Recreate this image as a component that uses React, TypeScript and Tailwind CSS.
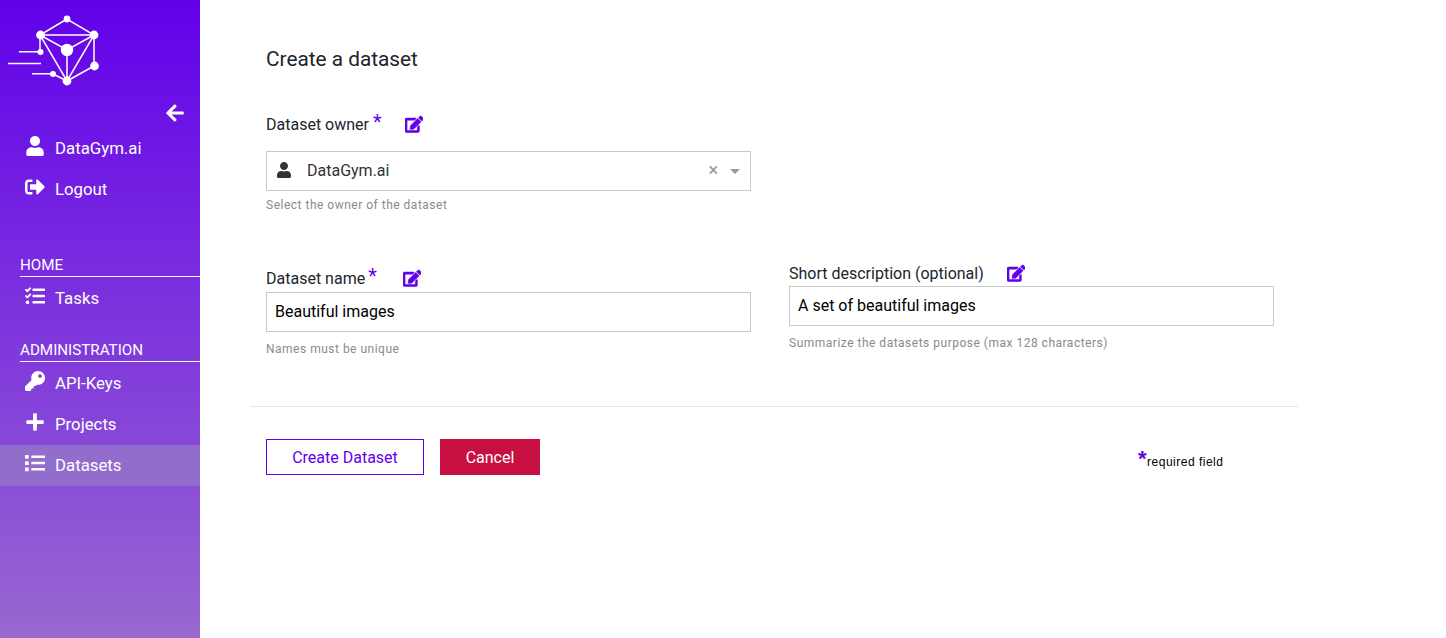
import React from 'react';
import { FaArrowLeft, FaEdit, FaKey, FaList, FaPlus, FaSignOutAlt, FaTasks, FaUser } from 'react-icons/fa';

const Logo = () => (
  <svg width="120" height="95" viewBox="0 0 120 95" className="block">
    <g stroke="#fff" strokeWidth="1.5" fill="none">
      <path d="M67 19 40 35 67 81 94 35Z" />
      <path d="M40 35H94V66L67 81" />
      <path d="M40 35 67 50 94 35M67 50V81M40 35V52M53 74 67 81" />
    </g>
    <g stroke="#fff" strokeWidth="1.5">
      <path d="M19 51.8H40M8 63.5H41M32 73.8H53" />
    </g>
    <g fill="#fff">
      <circle cx="67" cy="19" r="3.4" />
      <circle cx="40.5" cy="35" r="4.4" />
      <circle cx="94" cy="35" r="4.4" />
      <circle cx="67" cy="50" r="6.2" />
      <circle cx="94.5" cy="66" r="4.4" />
      <circle cx="67" cy="81" r="4.4" />
      <circle cx="40.5" cy="52" r="3" />
      <circle cx="53" cy="74" r="3" />
    </g>
  </svg>
);

// ── Sidebar ─────────────────────────────────────────────────────────────────
const NavItem: React.FC<{ icon: React.ReactNode; label: string; active?: boolean }> = ({ icon, label, active }) => (
  <div className={`flex items-center h-[41px] pl-[25px] text-white text-[16.8px] ${active ? 'bg-[#936dcb]' : ''}`}>
    <span className="w-[30px] flex -translate-y-[3px]">{icon}</span>
    {label}
  </div>
);

const NavHeading: React.FC<{ label: string }> = ({ label }) => (
  <div className="ml-5 mb-px border-b border-white text-white text-[15.2px] leading-[19px] h-[21px] uppercase">{label}</div>
);

const Sidebar = () => (
  <aside className="w-[200px] shrink-0 min-h-[638px] flex flex-col bg-linear-to-b/srgb from-[#6200ea] to-[#9868d0]">
    <Logo />
    <div className="flex justify-end pr-[15px] h-[33px] pt-[8px]">
      <FaArrowLeft size={20} color="#fff" />
    </div>
    <NavItem icon={<FaUser size={20} />} label="DataGym.ai" />
    <NavItem icon={<FaSignOutAlt size={20} />} label="Logout" />
    <div className="h-[46px]" />
    <NavHeading label="Home" />
    <NavItem icon={<FaTasks size={20} />} label="Tasks" />
    <div className="h-[22px]" />
    <NavHeading label="Administration" />
    <NavItem icon={<FaKey size={20} />} label="API-Keys" />
    <NavItem icon={<FaPlus size={20} />} label="Projects" />
    <NavItem icon={<FaList size={20} />} label="Datasets" active />
  </aside>
);

// ── Form bits ───────────────────────────────────────────────────────────────
const Star = () => <span className="text-[#6200ea] text-[20px] leading-none">*</span>;

const FieldLabel: React.FC<{ label: string; required?: boolean; gap: string; starGap?: string }> = ({ label, required, gap, starGap }) => (
  <div className="flex items-center h-6 text-[16px] text-[#212529]">
    <span>{label}</span>
    {required && <span className={`${starGap ?? 'ml-[3px]'} -translate-y-px`}><Star /></span>}
    <span className={gap}>
      <FaEdit size={18.5} color="#6200ea" stroke="#6200ea" strokeWidth={18} className="block -translate-y-[1px]" />
    </span>
  </div>
);

const Help: React.FC<{ text: string; className?: string }> = ({ text, className }) => (
  <p className={`text-[12px] leading-[14px] tracking-[0.5px] text-[#8a8a8a] ${className ?? 'mt-[10px]'}`}>{text}</p>
);

const TextBox: React.FC<{ value: string }> = ({ value }) => (
  <div className="h-10 border border-[#c8c8c8] flex items-center px-2 text-[16px] text-black">{value}</div>
);

export default function App() {
  return (
    <div className="flex min-h-[638px] bg-white" style={{ fontFamily: 'Roboto, sans-serif' }}>
      <Sidebar />
      <main className="flex-1 pl-[50px]">
        <div className="w-[1048px]">
          <div className="px-4 pt-[45px]">
            <h1 className="text-[20.8px] leading-7 text-[#212529]">Create a dataset</h1>

            <div className="mt-[40px] w-[485px]">
              <FieldLabel label="Dataset owner" required starGap="ml-[4px]" gap="ml-[23px]" />
              <div className="mt-[14px] h-10 border border-[#c8c8c8] flex items-center text-[16px] text-[#333]">
                <FaUser size={16} color="#333" className="ml-[9px] mr-[15px] -translate-y-[1px]" />
                <span className="flex-1">DataGym.ai</span>
                <span className="text-[#999] text-[18px] leading-none mr-[12px] -translate-y-[1px]">×</span>
                <span className="mr-[10px] w-0 h-0 border-x-[5px] border-x-transparent border-t-[5px] border-t-[#999]" />
              </div>
              <Help text="Select the owner of the dataset" className="mt-[7px]" />
            </div>

            <div className="mt-[50px] grid grid-cols-[485px_485px] gap-x-[38px] items-start">
              <div className="pt-[5px]">
                <FieldLabel label="Dataset name" required gap="ml-[26px]" />
                <div className="mt-[1px]"><TextBox value="Beautiful images" /></div>
                <Help text="Names must be unique" />
              </div>
              <div>
                <FieldLabel label="Short description (optional)" gap="ml-[23px]" />
                <TextBox value="A set of beautiful images" />
                <Help text="Summarize the datasets purpose (max 128 characters)" />
              </div>
            </div>
          </div>

          <hr className="mt-[50px] border-t border-[#e4e4e4]" />

          <div className="px-4 mt-8 flex items-start">
            <button className="w-[158px] h-9 pt-px border border-[#6200ea] text-[#6200ea] text-[16px] bg-white">Create Dataset</button>
            <button className="ml-4 w-[100px] h-9 pt-px bg-[#c80f42] text-white text-[16px]">Cancel</button>
            <div className="ml-[598px] mt-[9px] flex items-baseline text-black text-[12px] tracking-[0.5px]" style={{ fontFamily: '"Liberation Sans", sans-serif' }}>
              <span className="text-[#6200ea] text-[22px] leading-none font-bold">*</span>
              required field
            </div>
          </div>
        </div>
      </main>
    </div>
  );
}
